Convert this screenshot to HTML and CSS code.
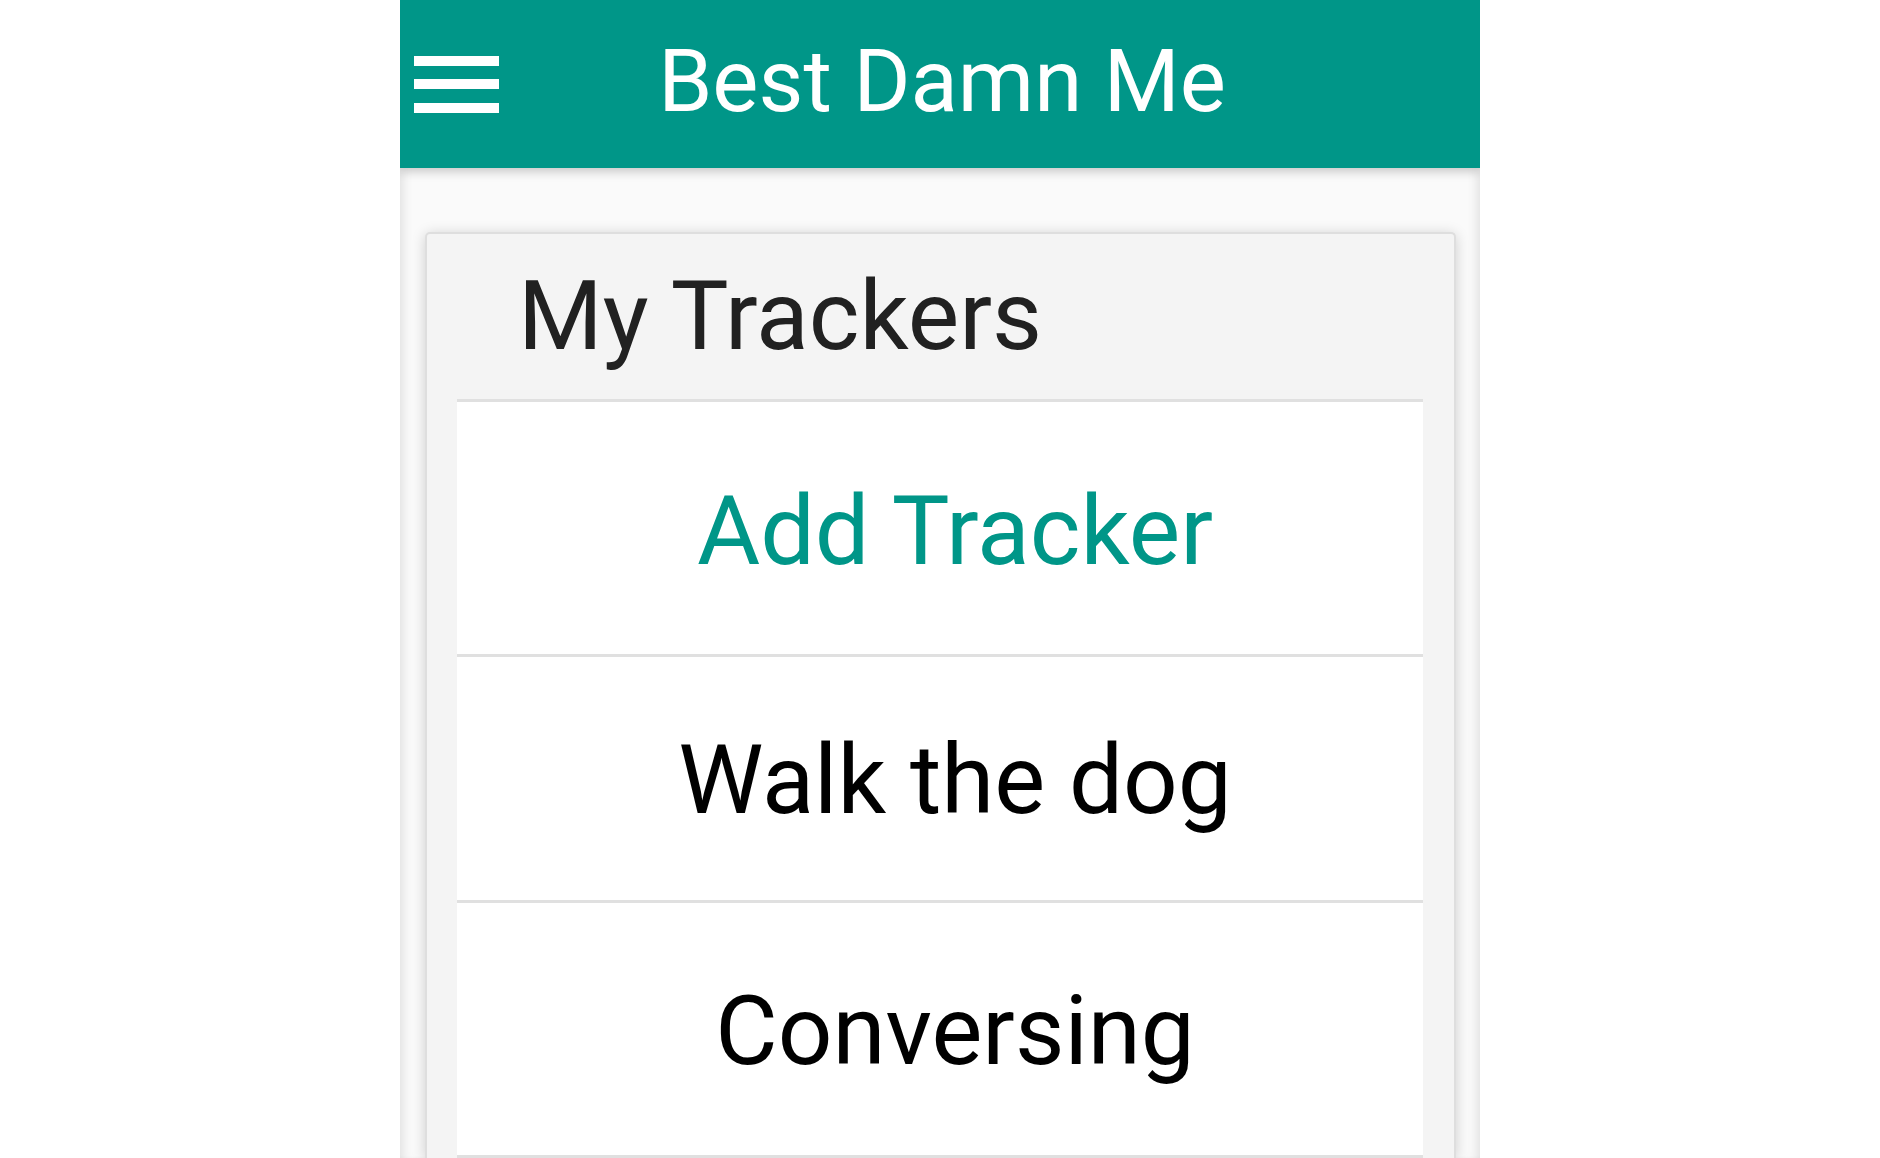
FILE: index.html
```html
<!DOCTYPE html>
<html lang="en">
<head>
<meta charset="utf-8">
<title>Best Damn Me</title>
<link rel="stylesheet" href="styles.css">
</head>
<body>
<div class="app">
  <header class="topbar">
    <button class="menu-btn" aria-label="Menu">
      <svg class="menu-icon" width="85" height="57" viewBox="0 0 85 57">
        <rect x="0" y="0" width="85" height="10" fill="#fff"/>
        <rect x="0" y="23" width="85" height="10" fill="#fff"/>
        <rect x="0" y="47" width="85" height="10" fill="#fff"/>
      </svg>
    </button>
    <h1 class="topbar-title">Best Damn Me</h1>
    <span class="topbar-spacer"></span>
  </header>
  <main class="content">
    <section class="card">
      <h2 class="card-title">My Trackers</h2>
      <ul class="tracker-list">
        <li class="tracker-item tracker-item--add">Add Tracker</li>
        <li class="tracker-item tracker-item--mid">Walk the dog</li>
        <li class="tracker-item">Conversing</li>
      </ul>
    </section>
  </main>
</div>
</body>
</html>
```
FILE: styles.css
```css
html, body {
  margin: 0;
  padding: 0;
  background: #ffffff;
  height: 100%;
  overflow: hidden;
}

body {
  font-family: Roboto, "Liberation Sans", Arial, sans-serif;
}

.app {
  width: 1080px;
  height: 100vh;
  margin: 0 auto;
  background: #fafafa;
  box-shadow: inset 10px 0 12px -8px rgba(0, 0, 0, 0.12),
              inset -10px 0 12px -8px rgba(0, 0, 0, 0.12);
  display: flex;
  flex-direction: column;
  overflow: hidden;
}

.topbar {
  height: 168px;
  flex: none;
  background: #009688;
  display: grid;
  grid-template-columns: 110px 1fr 110px;
  align-items: start;
  box-shadow: 0 3px 10px rgba(0, 0, 0, 0.22);
  position: relative;
  z-index: 2;
}

.menu-btn {
  margin: 56px 0 0 14px;
  padding: 0;
  border: 0;
  background: transparent;
  width: 85px;
  height: 57px;
  display: block;
}

.menu-icon {
  display: block;
}

.topbar-title {
  margin: 38px 0 0;
  font-size: 87px;
  line-height: 87px;
  font-weight: 400;
  color: #ffffff;
  text-align: center;
  white-space: nowrap;
  padding-left: 4px;
}

.content {
  flex: 1;
  min-height: 0;
  padding: 64px 24px 0 25px;
}

.card {
  background: #f4f4f4;
  border: 2px solid #dedede;
  border-bottom: 0;
  border-radius: 5px 5px 0 0;
  box-shadow: 0 2px 14px rgba(0, 0, 0, 0.18);
  padding: 0 31px 0 30px;
}

.card-title {
  margin: 0;
  padding: 34px 0 0 61px;
  height: 165px;
  box-sizing: border-box;
  font-size: 97px;
  line-height: 96px;
  font-weight: 400;
  color: #212121;
  white-space: nowrap;
}

.tracker-list {
  list-style: none;
  margin: 0;
  padding: 0;
  background: #ffffff;
}

.tracker-item {
  border-top: 3px solid #e0e0e0;
  padding: 80px 0 76px 30px;
  font-size: 96px;
  line-height: 96px;
  color: #000000;
  text-align: center;
  white-space: nowrap;
}

.tracker-item:last-child {
  border-bottom: 3px solid #e0e0e0;
}

.tracker-item--add {
  color: #009688;
  font-size: 97px;
  padding-top: 81px;
  padding-bottom: 75px;
}

.tracker-item--mid {
  padding-top: 75px;
  padding-bottom: 72px;
}
```
